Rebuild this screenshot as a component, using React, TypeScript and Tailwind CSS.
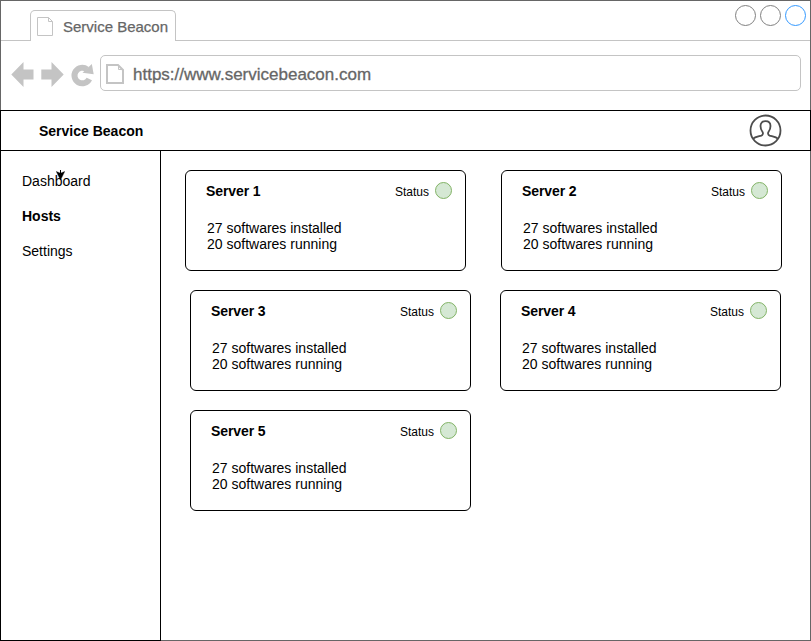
type Host = { name: string };

const hostRows: { hosts: Host[]; spacing: string }[] = [
  { hosts: [{ name: 'Server 1' }, { name: 'Server 2' }], spacing: 'pl-6 gap-[35px]' },
  { hosts: [{ name: 'Server 3' }, { name: 'Server 4' }], spacing: 'pl-[29px] gap-[29px]' },
  { hosts: [{ name: 'Server 5' }], spacing: 'pl-[29px]' },
];

function UserIcon() {
  return (
    <svg className="-mt-px mr-[28px] h-[33px] w-[33px] shrink-0" viewBox="-0.5 -0.5 33 33" fill="none" stroke="#4d4d4d" strokeWidth="1.8">
      <circle cx="16" cy="16" r="15" />
      <path d="M3.3 24.4C5.5 22.3 9.5 21.9 11.9 21.1C13.7 20.4 13.8 18.6 12.9 17.3C11.6 15.6 11 13.6 11 11.6C11 8.4 13 6.6 16 6.6C19 6.6 21 8.4 21 11.6C21 13.6 20.4 15.6 19.1 17.3C18.2 18.6 18.3 20.4 20.1 21.1C22.5 21.9 26.5 22.3 28.7 24.4" />
    </svg>
  );
}

function BrowserChrome() {
  return (
    <div className="flex h-[110px] flex-col border-x border-t border-[#666]">
      <div className="flex h-10 shrink-0">
        <div className="w-[29px] border-b border-[#c4c4c4]" />
        <div className="mt-[9px] flex w-[146px] items-center rounded-t-[5px] border-x border-t border-[#c4c4c4] pl-1.5">
          <svg className="mt-px h-[19px] w-4 shrink-0" viewBox="0 0 16 19" fill="none" stroke="#c4c4c4">
            <path d="M.5.5H11.5L15.5 4.5V18.5H.5ZM11.5.5V4.5H15.5" />
          </svg>
          <span className="ml-2.5 mt-0.5 whitespace-nowrap text-[15px] leading-5 text-[#666] [-webkit-text-stroke:0.25px_#666]">Service Beacon</span>
        </div>
        <div className="flex flex-1 justify-end gap-1 border-b border-[#c4c4c4] pr-1 pt-1">
          <div className="h-[21px] w-[21px] rounded-full border border-[#808080]" />
          <div className="h-[21px] w-[21px] rounded-full border border-[#808080]" />
          <div className="h-[21px] w-[21px] rounded-full border border-[#3399ff]" />
        </div>
      </div>
      <div className="flex items-start pl-2.5 pt-3.5">
        <svg className="mt-1.5 h-7 w-[84px] shrink-0" viewBox="11 61 84 28" fill="#c4c4c4">
          <path d="M11.3 74.5L23.5 62V69.5H33.5V79.5H23.5V87Z" />
          <path d="M63.7 74.5L51.5 62V69.5H41.3V79.5H51.5V87Z" />
          <path d="M87 69.3A7.8 7.8 0 1 0 89.3 79" fill="none" stroke="#c4c4c4" strokeWidth="6" />
          <path d="M91.8 64L93.7 74.3L82.5 72.8Z" />
        </svg>
        <div className="ml-[5px] flex h-9 w-[701px] items-center rounded-[5px] border border-[#c4c4c4] pl-[5px]">
          <svg className="mt-px h-5 w-[18px] shrink-0" viewBox="0 0 18 20" fill="none" stroke="#c4c4c4" strokeWidth="2">
            <path d="M1 1H12L17 6V19H1Z" />
            <path d="M12.5 1V5.5H17" strokeWidth="1" />
          </svg>
          <span className="ml-[9px] mt-1 text-[17px] leading-5 text-[#666] [-webkit-text-stroke:0.3px_#666]">https://www.servicebeacon.com</span>
        </div>
      </div>
    </div>
  );
}

function HostCard({ name }: Host) {
  return (
    <article className="h-[101px] w-[281px] rounded-[6px] border border-black pl-[19px] pr-[13px] pt-[11px]">
      <div className="flex h-[17px] items-center">
        <h2 className="flex-1 pl-px pt-px text-sm leading-4 font-bold tracking-[-0.1px]">{name}</h2>
        <span className="pt-0.5 text-xs leading-4">Status</span>
        <span className="ml-1.5 h-[17px] w-[17px] rounded-full border border-[#82b366] bg-[#d5e8d4]" />
      </div>
      <p className="pl-0.5 pt-[21px] text-sm leading-4">
        27 softwares installed
        <br />
        20 softwares running
      </p>
    </article>
  );
}

export default function App() {
  return (
    <div className="h-[641px] w-[811px] overflow-hidden bg-white font-['Liberation_Sans',Arial,sans-serif] text-black">
      <BrowserChrome />
      <header className="flex h-[41px] items-center justify-between border border-black pl-[38px]">
        <h1 className="text-sm leading-4 font-bold">Service Beacon</h1>
        <UserIcon />
      </header>
      <div className="flex h-[490px]">
        <nav className="relative flex w-[161px] shrink-0 flex-col gap-[19px] border-x border-b border-black pl-[21px] pt-[22px] text-sm leading-4">
          <a>Dashboard</a>
          <a className="font-bold">Hosts</a>
          <a>Settings</a>
          <svg className="absolute left-[55px] top-[19px] h-[11px] w-[9px]" viewBox="0 0 9 11">
            <path d="M4.5 10L.3 1.5L4.5 3.2L8.7 1.5Z" fill="black" stroke="black" strokeWidth="0.4" />
            <path d="M4.5 0V4" stroke="black" />
          </svg>
        </nav>
        <main className="flex flex-1 flex-col gap-[19px] border-b border-r border-[#666] pt-[19px]">
          {hostRows.map((row) => (
            <div key={row.hosts[0].name} className={`flex ${row.spacing}`}>
              {row.hosts.map((host) => (
                <HostCard key={host.name} name={host.name} />
              ))}
            </div>
          ))}
        </main>
      </div>
    </div>
  );
}
